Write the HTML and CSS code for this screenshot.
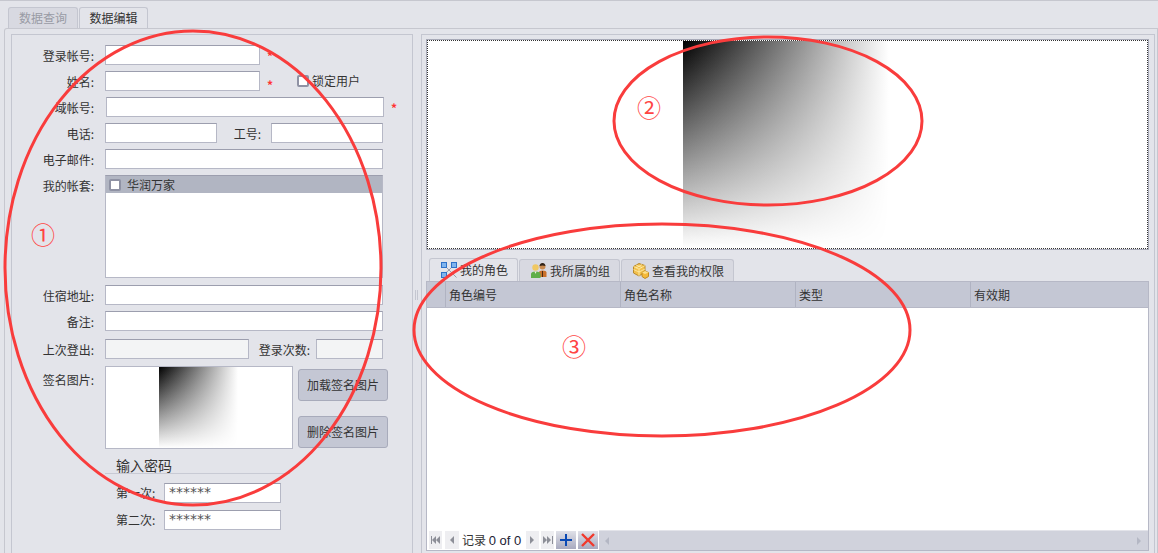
FILE: index.html
```html
<!DOCTYPE html>
<html lang="zh-CN">
<head>
  <meta charset="UTF-8" />
  <title>数据编辑</title>
  <link rel="stylesheet" href="styles.css">
</head>
<body>

  <div class="tabs top-tabs">
    <div class="tab">数据查询</div>
    <div class="tab active">数据编辑</div>
  </div>

  <div class="page">
    <div class="form-panel">
      <div class="row">
        <label>登录帐号:</label>
        <div class="input w-155"></div>
        <span class="req">*</span>
      </div>
      <div class="row">
        <label>姓名:</label>
        <div class="input w-155"></div>
        <span class="req req-low">*</span>
        <div class="lock"><span class="check"></span>锁定用户</div>
      </div>
      <div class="row">
        <label>域帐号:</label>
        <div class="input w-278 shift"></div>
        <span class="req">*</span>
      </div>
      <div class="row">
        <label>电话:</label>
        <div class="input w-112"></div>
        <label class="inner-label">工号:</label>
        <div class="input w-112"></div>
      </div>
      <div class="row">
        <label>电子邮件:</label>
        <div class="input w-278"></div>
      </div>
      <div class="row row-list">
        <label>我的帐套:</label>
        <div class="list w-278">
          <div class="list-item"><span class="check"></span>华润万家</div>
        </div>
      </div>
      <div class="row">
        <label>住宿地址:</label>
        <div class="input w-278"></div>
      </div>
      <div class="row">
        <label>备注:</label>
        <div class="input w-278"></div>
      </div>
      <div class="row row-logout">
        <label>上次登出:</label>
        <div class="input readonly w-144"></div>
        <label class="count-label">登录次数:</label>
        <div class="input readonly w-67"></div>
      </div>
      <div class="row row-sign">
        <label>签名图片:</label>
        <div class="sign-box"><div class="fade sign-fade"></div></div>
        <div class="sign-btns">
          <div class="btn">加载签名图片</div>
          <div class="btn">删除签名图片</div>
        </div>
      </div>
      <div class="pass-group">
        <div class="pass-title">输入密码</div>
        <div class="pass-row">
          <label>第一次:</label>
          <div class="input pass">******</div>
        </div>
        <div class="pass-row">
          <label>第二次:</label>
          <div class="input pass">******</div>
        </div>
      </div>
    </div>

    <div class="splitter"></div>

    <div class="right-panel">
      <div class="photo-frame">
        <div class="photo-box"><div class="fade photo-fade"></div></div>
      </div>

      <div class="tabs grid-tabs">
        <div class="tab active">
          <svg width="16" height="16" viewBox="0 0 16 16">
            <path d="M3 3 L15.5 15.5 M13 3 L8 8 M3 12.5 L8 8" stroke="#9a9ca8" fill="none"/>
            <rect x="0.5" y="0.5" width="5" height="5" fill="#7fb4ee" stroke="#2f72c8"/>
            <rect x="10.5" y="0.5" width="5" height="5" fill="#7fb4ee" stroke="#2f72c8"/>
            <rect x="0.5" y="10.5" width="5" height="5" fill="#7fb4ee" stroke="#2f72c8"/>
          </svg>
          我的角色
        </div>
        <div class="tab">
          <svg width="16" height="16" viewBox="0 0 16 16">
            <circle cx="11.5" cy="3.5" r="3" fill="#c98a50"/>
            <path d="M8.5 3 Q9 0 11.5 0 Q14 0 14.5 3 Q11.5 1.8 8.5 3 Z" fill="#2e2118"/>
            <path d="M8 14 V9.5 Q8 7.5 11.5 7.5 Q15.5 7.5 15.5 9.5 V14 Z" fill="#c9702a"/>
            <path d="M11 8 L12 8 L12 14 L11 14 Z" fill="#4a2a12"/>
            <circle cx="4.5" cy="4.5" r="3.2" fill="#f0c862"/>
            <path d="M0 15 V11 Q0 8.5 4.5 8.5 Q9.5 8.5 9.5 11 V15 Z" fill="#5fae4a"/>
            <path d="M3.5 8.5 L5.5 8.5 L4.5 11 Z" fill="#f4f4e0"/>
          </svg>
          我所属的组
        </div>
        <div class="tab">
          <svg width="16" height="16" viewBox="0 0 16 16">
            <path d="M0.5 3.5 L6 0.5 L12 2.5 L12 9 L6 13 L0.5 10 Z" fill="#f2c04c" stroke="#b98a2c"/>
            <path d="M0.5 3.5 L6 6 L12 2.5 M6 6 V13 M0.5 6.5 L6 9 L12 6 M3 2 L9 4.5 M9 1.5 L3 5" stroke="#fff2b8" fill="none" stroke-width="0.7"/>
            <path d="M9 9.5 L12 8 L15.5 9.5 V13.5 L12 15.5 L9 13.5 Z" fill="#f5b93a" stroke="#c08a20"/>
            <path d="M9 9.5 L12 11 L15.5 9.5 L12 8 Z" fill="#fde08a"/>
          </svg>
          查看我的权限
        </div>
      </div>

      <div class="grid">
        <div class="grid-head">
          <div class="col col-mark"></div>
          <div class="col col-no">角色编号</div>
          <div class="col col-name">角色名称</div>
          <div class="col col-type">类型</div>
          <div class="col col-date">有效期</div>
        </div>
        <div class="grid-body"></div>
        <div class="grid-foot">
          <div class="nav-btn">
            <svg width="10" height="8" viewBox="0 0 10 8"><path d="M0 0h1v8H0zM5 0v8L1 4zM9 0v8L5 4z" fill="#8d8f98"/></svg>
          </div>
          <div class="nav-btn nav-prev">
            <svg width="5" height="8" viewBox="0 0 5 8"><path d="M4 0v8L0 4z" fill="#8d8f98"/></svg>
          </div>
          <div class="nav-text">记录 <span>0 of 0</span></div>
          <div class="nav-btn">
            <svg width="5" height="8" viewBox="0 0 5 8"><path d="M0 0v8l4-4z" fill="#8d8f98"/></svg>
          </div>
          <div class="nav-btn">
            <svg width="10" height="8" viewBox="0 0 10 8"><path d="M0 0v8l4-4zM4 0v8l4-4zM9 0h1v8H9z" fill="#8d8f98"/></svg>
          </div>
          <div class="nav-action">
            <svg width="14" height="14" viewBox="0 0 14 14"><path d="M6 1h2v5h5v2H8v5H6V8H1V6h5z" fill="#0a49b4"/></svg>
          </div>
          <div class="nav-action">
            <svg width="16" height="16" viewBox="0 0 16 16"><path d="M2 2 L14 14 M14 2 L2 14" stroke="#f0392c" stroke-width="2.4"/></svg>
          </div>
          <div class="scrollbar">
            <svg width="5" height="8" viewBox="0 0 5 8"><path d="M4 0v8L0 4z" fill="#b4b7c4"/></svg>
            <svg width="5" height="8" viewBox="0 0 5 8"><path d="M0 0v8l4-4z" fill="#b4b7c4"/></svg>
          </div>
        </div>
      </div>
    </div>
  </div>

  <!-- hand drawn notes on top of the screenshot -->
  <svg class="notes" width="1158" height="553" viewBox="0 0 1158 553">
    <ellipse cx="193" cy="268" rx="188" ry="237" />
    <ellipse cx="768" cy="121" rx="154" ry="84" />
    <ellipse cx="662" cy="330" rx="248" ry="106" />
  </svg>
  <div class="note-num n1">①</div>
  <div class="note-num n2">②</div>
  <div class="note-num n3">③</div>

</body>
</html>
```

FILE: styles.css
```css
* {
  box-sizing: border-box;
}

html, body {
  height: 553px;
  overflow: hidden;
}

body {
  position: relative;
  margin: 0;
  background: #e3e4ea;
  color: #333;
  font-family: "Noto Sans CJK SC", "Liberation Sans", sans-serif;
  font-size: 12px;
  line-height: 16px;
  border-top: 1px solid #c6c7cf;
}

.tabs {
  display: flex;
}

.tab {
  display: flex;
  align-items: center;
  justify-content: center;
  background: #d8d9e1;
  border: 1px solid #c4c6d0;
  border-bottom: none;
  border-radius: 3px 3px 0 0;
  color: #333;
}

.tab.active {
  background: #e3e4ea;
}

.top-tabs {
  height: 27px;
  padding: 6px 0 0 8px;
  gap: 1px;
}

.top-tabs .tab {
  width: 70px;
  height: 21px;
  color: #999ba5;
}

.top-tabs .tab.active {
  width: 69px;
  color: #333;
}

.page {
  display: flex;
  height: 525px;
  margin-left: 4px;
  padding: 5px 2px 0 6px;
  border: 1px solid #c6c7cf;
  border-bottom: none;
  border-radius: 3px 0 0 0;
}

.form-panel {
  width: 402px;
  padding: 10px 0 0 0;
  border: 1px solid #c4c6d0;
  border-bottom: none;
}

.row {
  display: flex;
  align-items: flex-start;
  height: 20px;
  margin-bottom: 6px;
}

.row label {
  width: 82px;
  flex: none;
  margin-right: 11px;
  text-align: right;
  line-height: 21px;
}

.input {
  height: 20px;
  background: #fff;
  border: 1px solid #b6b8c6;
  border-top-color: #9c9eae;
}

.input.readonly {
  background: #f3f4f5;
}

.w-155 { width: 155px; }
.w-278 { width: 278px; }
.w-112 { width: 112px; }
.w-144 { width: 144px; }
.w-67 { width: 67px; }

.shift {
  margin-left: 1px;
}

.req {
  margin-left: 7px;
  color: #f33;
  font-weight: bold;
  line-height: 22px;
}

.req-low {
  margin-top: 3px;
}

.lock {
  display: flex;
  align-items: center;
  margin-left: 24px;
  line-height: 20px;
}

.check {
  width: 12px;
  height: 12px;
  margin-right: 3px;
  background: #fff;
  border: 2px solid #8f92a4;
  border-radius: 2px;
}

.inner-label.inner-label {
  width: 44px;
  margin-right: 10px;
}

.row-list {
  height: 103px;
  margin-bottom: 7px;
}

.list {
  height: 103px;
  background: #fff;
  border: 1px solid #b6b8c6;
  border-top-color: #9c9eae;
}

.list-item {
  display: flex;
  align-items: center;
  height: 17px;
  padding-left: 3px;
  background: #b1b5c2;
}

.list-item .check {
  margin-right: 6px;
}

.row-logout {
  margin-top: 8px;
  margin-bottom: 7px;
}

.count-label.count-label {
  width: 61px;
  margin-right: 6px;
}

.row-sign {
  height: 83px;
  margin-bottom: 8px;
}

.row-sign label {
  margin-top: 3px;
}

.sign-box {
  width: 188px;
  height: 83px;
  padding-left: 53px;
  background: #fff;
  border: 1px solid #b6b8c6;
}

.fade {
  background: linear-gradient(to right, #000, #fff), linear-gradient(to bottom, #000, #fff);
  background-blend-mode: screen;
}

.sign-fade {
  width: 79px;
  height: 81px;
}

.sign-btns {
  display: flex;
  flex-direction: column;
  gap: 15px;
  margin: 3px 0 0 5px;
}

.btn {
  display: flex;
  align-items: center;
  justify-content: center;
  width: 90px;
  height: 32px;
  background: #c4c7d4;
  border: 1px solid #a8abbb;
  border-radius: 3px;
}

.pass-group {
  width: 185px;
  margin-left: 93px;
}

.pass-title {
  height: 17px;
  padding-left: 11px;
  margin-bottom: 9px;
  border-bottom: 1px solid #c8cad4;
  font-size: 14px;
}

.pass-row {
  display: flex;
  align-items: center;
  margin-bottom: 7px;
  padding-left: 11px;
}

.pass-row label {
  width: 48px;
}

.pass {
  width: 117px;
  padding-left: 4px;
  font-family: "DejaVu Sans", sans-serif;
  font-size: 14px;
  line-height: 16px;
  color: #555;
}

.splitter {
  width: 3px;
  height: 10px;
  margin: 256px 3px 0 2px;
  border-left: 1px solid #c4c6d0;
  border-right: 1px solid #c4c6d0;
}

.right-panel {
  flex: 1;
  padding: 4px 5px 0 4px;
  border: 1px solid #c4c6d0;
  border-bottom: none;
}

.photo-frame {
  height: 211px;
  background: #fff;
  border: 1px solid #a8aab8;
}

.photo-box {
  display: flex;
  justify-content: center;
  height: 209px;
  padding-right: 3px;
  border: 1px dotted #333;
}

.photo-fade {
  width: 206px;
  height: 207px;
}

.grid-tabs {
  height: 23px;
  margin-top: 8px;
  padding-left: 3px;
  gap: 1px;
}

.grid-tabs .tab {
  gap: 3px;
  height: 22px;
  margin-top: 1px;
  padding: 0 9px 0 11px;
}

.grid-tabs .tab.active {
  height: 23px;
  margin-top: 0;
}

.grid {
  display: flex;
  flex-direction: column;
  height: 270px;
  background: #fff;
  border: 1px solid #b6b8c6;
}

.grid-head {
  display: flex;
  height: 26px;
  background: #c4c7d4;
  border-bottom: 1px solid #b6b8c6;
}

.col {
  padding-left: 3px;
  line-height: 25px;
  border-right: 1px solid #b0b3c2;
}

.col-mark { width: 19px; }
.col-no { width: 175px; }
.col-name { width: 175px; }
.col-type { width: 175px; }
.col-date { flex: 1; border-right: none; }

.grid-body {
  flex: 1;
}

.grid-foot {
  display: flex;
  align-items: stretch;
  height: 20px;
  padding: 1px 0 1px 2px;
  gap: 2px;
}

.nav-btn {
  display: flex;
  align-items: center;
  justify-content: center;
  width: 13px;
  background: #eeeef1;
}

.nav-prev {
  width: 14px;
  margin-left: 1px;
}

.nav-text {
  width: 60px;
  margin: 0 2px 0 1px;
  line-height: 18px;
  white-space: nowrap;
}

.nav-text span {
  font-family: "Liberation Sans", sans-serif;
  font-size: 13px;
  color: #223;
}

.nav-action {
  display: flex;
  align-items: center;
  justify-content: center;
  width: 20px;
  background: linear-gradient(#e0e1e8, #a8aabf);
}

.scrollbar {
  display: flex;
  flex: 1;
  align-items: center;
  justify-content: space-between;
  margin: -1px 0 -1px -1px;
  padding: 0 6px;
  background: #d0d2dc;
  border-top: 1px solid #e3e4ea;
}

.notes {
  position: absolute;
  top: -1px;
  left: 0;
  pointer-events: none;
}

.notes ellipse {
  fill: none;
  stroke: #f93c3c;
  stroke-width: 3;
}

.note-num {
  position: absolute;
  color: #f44;
  font-size: 24px;
  line-height: 24px;
}

.n1 { left: 31px; top: 221px; }
.n2 { left: 637px; top: 94px; }
.n3 { left: 562px; top: 333px; }
```
